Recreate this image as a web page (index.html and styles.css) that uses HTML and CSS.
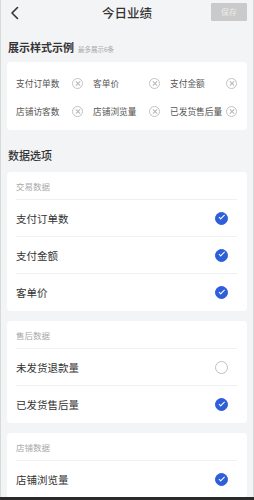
FILE: index.html
```html
<!DOCTYPE html>
<html lang="zh">
<head>
<meta charset="utf-8">
<link rel="stylesheet" href="styles.css">
</head>
<body>
<div class="screen">
  <div class="nav">
    <svg class="back" width="10" height="14" viewBox="0 0 10 14"><path d="M7.5 1.5 L2 7 L7.5 12.5" fill="none" stroke="#333" stroke-width="1.6" stroke-linecap="round" stroke-linejoin="round"/></svg>
    <div class="title">今日业绩</div>
    <div class="save">保存</div>
  </div>

  <div class="sec-title">展示样式示例<span class="sub">最多展示6条</span></div>
  <div class="card tags">
    <div class="tag"><span>支付订单数</span><i class="x"></i></div>
    <div class="tag"><span>客单价</span><i class="x"></i></div>
    <div class="tag"><span>支付金额</span><i class="x"></i></div>
    <div class="tag"><span>店铺访客数</span><i class="x"></i></div>
    <div class="tag"><span>店铺浏览量</span><i class="x"></i></div>
    <div class="tag"><span>已发货售后量</span><i class="x"></i></div>
  </div>

  <div class="sec-title sec2">数据选项</div>

  <div class="card group">
    <div class="ghead">交易数据</div>
    <div class="row"><span>支付订单数</span><i class="chk on"></i></div>
    <div class="row"><span>支付金额</span><i class="chk on"></i></div>
    <div class="row"><span>客单价</span><i class="chk on"></i></div>
  </div>

  <div class="card group">
    <div class="ghead">售后数据</div>
    <div class="row"><span>未发货退款量</span><i class="chk"></i></div>
    <div class="row"><span>已发货售后量</span><i class="chk on"></i></div>
  </div>

  <div class="card group">
    <div class="ghead">店铺数据</div>
    <div class="row"><span>店铺浏览量</span><i class="chk on"></i></div>
  </div>
</div>
<div class="frame-bottom"></div>
</body>
</html>
```

FILE: styles.css
```css
* { box-sizing: border-box; margin: 0; padding: 0; }
body {
  margin: 0;
  background: #f3f4f6;
  font-family: "Noto Sans CJK SC", "Noto Sans", sans-serif;
  color: #333;
}
.screen {
  height: 497px;
  overflow: hidden;
  border-left: 1px solid #d9d9d9;
  border-right: 1px solid #d9d9d9;
  padding: 0 6px;
}
.frame-bottom { height: 3px; background: #2a2a2a; }
.nav {
  height: 27px;
  display: flex;
  align-items: center;
  justify-content: space-between;
  position: relative;
}
.back { margin-left: 3px; margin-top: -1px; }
.title {
  position: absolute;
  left: 0; right: 0; top: 4px;
  text-align: center;
  font-size: 12.5px;
  font-weight: 500;
  color: #333;
  line-height: 18px;
  pointer-events: none;
}
.save {
  width: 36px;
  height: 18px;
  margin-top: -3px;
  background: #cacaca;
  color: #ececec;
  font-size: 8px;
  line-height: 18px;
  text-align: center;
  border-radius: 1px;
}
.sec-title {
  margin-top: 12px;
  height: 16px;
  line-height: 16px;
  padding-left: 1px;
  font-size: 11px;
  font-weight: 700;
  color: #333;
  display: flex;
  align-items: baseline;
}
.sub {
  font-size: 6.5px;
  font-weight: 400;
  color: #a8a8a8;
  margin-left: 4px;
}
.card {
  background: #fff;
  border-radius: 4px;
}
.tags {
  margin-top: 7px;
  height: 68px;
  padding: 7px 9px 0 9px;
  display: grid;
  grid-template-columns: 77px 77px 77px;
  grid-auto-rows: 28px;
}
.tag {
  display: flex;
  align-items: center;
  font-size: 8.7px;
  color: #555;
  white-space: nowrap;
}
.tag span { width: 56px; }
.x {
  width: 11px; height: 11px;
  border: 1px solid #c2c2c2;
  border-radius: 50%;
  position: relative;
  flex: none;
}
.x::before, .x::after {
  content: "";
  position: absolute;
  left: 1.5px; top: 4px;
  width: 6px; height: 1px;
  background: #b8b8b8;
  transform: rotate(45deg);
}
.x::after { transform: rotate(-45deg); }
.sec2 { margin-top: 17px; font-weight: 500; }
.group {
  margin-top: 9px;
  padding: 0 10px 0 9px;
}
.group + .group { margin-top: 10px; }
.ghead {
  height: 28px;
  line-height: 28px;
  font-size: 8.5px;
  color: #a9a9a9;
  border-bottom: 1px solid #f0f0f0;
}
.row {
  height: 37px;
  display: flex;
  align-items: center;
  justify-content: space-between;
  font-size: 10.5px;
  color: #333;
  border-bottom: 1px solid #f0f0f0;
}
.row:last-child { border-bottom: none; }
.chk {
  width: 13px; height: 13px;
  border-radius: 50%;
  border: 1px solid #bfbfbf;
  margin-right: 9px;
  position: relative;
}
.chk.on {
  background: #2f5fd8;
  border-color: #2f5fd8;
}
.chk.on::after {
  content: "";
  position: absolute;
  left: 3.2px; top: 2.6px;
  width: 4.5px; height: 2.4px;
  border-left: 1.3px solid #fff;
  border-bottom: 1.3px solid #fff;
  transform: rotate(-45deg);
}
```
